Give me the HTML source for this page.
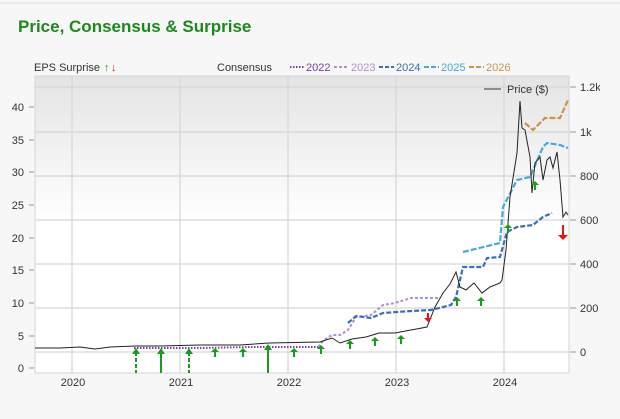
<!DOCTYPE html>
<html><head><style>
body{margin:0;width:620px;height:414px;background:#f6f6f6;font-family:"Liberation Sans",sans-serif;overflow:hidden}
</style></head><body>
<svg width="620" height="414" xmlns="http://www.w3.org/2000/svg" font-family="Liberation Sans, sans-serif">
<defs><linearGradient id="g" x1="0" y1="0" x2="0" y2="1"><stop offset="0" stop-color="#e4e4e4"/><stop offset="0.5" stop-color="#ffffff"/><stop offset="1" stop-color="#ffffff"/></linearGradient></defs>
<rect x="0" y="0" width="620" height="414" fill="#f7f7f7"/>
<line x1="0" y1="3" x2="620" y2="3" stroke="#dcdcdc"/>
<text x="18" y="32" font-size="17" font-weight="bold" fill="#1b8a1b">Price, Consensus &amp; Surprise</text>
<text x="34" y="71" font-size="11" fill="#333">EPS Surprise</text>
<text x="104" y="71" font-size="11" fill="#1a9a1a" font-weight="bold">↑</text>
<text x="111" y="71" font-size="11" fill="#e11" font-weight="bold">↓</text>
<text x="217" y="71" font-size="11" fill="#333">Consensus</text>
<line x1="290" y1="67" x2="305" y2="67" stroke="#7b3fa0" stroke-width="2" stroke-dasharray="1.5,1.5"/>
<text x="306" y="71" font-size="11" fill="#7b3fa0">2022</text>
<line x1="334" y1="67" x2="349" y2="67" stroke="#b48fd0" stroke-width="2" stroke-dasharray="3,2"/>
<text x="351" y="71" font-size="11" fill="#b48fd0">2023</text>
<line x1="379" y1="67" x2="394" y2="67" stroke="#3a6fb5" stroke-width="2" stroke-dasharray="4,2"/>
<text x="396" y="71" font-size="11" fill="#3a6fb5">2024</text>
<line x1="424" y1="67" x2="439" y2="67" stroke="#4aa8d8" stroke-width="2" stroke-dasharray="5,2"/>
<text x="441" y="71" font-size="11" fill="#4aa8d8">2025</text>
<line x1="469" y1="67" x2="484" y2="67" stroke="#c8964b" stroke-width="2" stroke-dasharray="5,2"/>
<text x="486" y="71" font-size="11" fill="#c8964b">2026</text>
<rect x="35" y="76" width="534" height="297" fill="url(#g)" stroke="#d4d4d4"/>
<g stroke="#d6d6d6" stroke-width="1.2">
<line x1="35" y1="87" x2="569" y2="87"/><line x1="35" y1="132" x2="569" y2="132"/><line x1="35" y1="176" x2="569" y2="176"/><line x1="35" y1="220" x2="569" y2="220"/><line x1="35" y1="264" x2="569" y2="264"/><line x1="35" y1="308" x2="569" y2="308"/><line x1="35" y1="352" x2="569" y2="352"/>
<line x1="72" y1="76" x2="72" y2="373"/><line x1="180" y1="76" x2="180" y2="373"/><line x1="288" y1="76" x2="288" y2="373"/><line x1="396" y1="76" x2="396" y2="373"/><line x1="504" y1="76" x2="504" y2="373"/>
</g>
<g font-size="11" fill="#333" text-anchor="end">
<text x="24" y="111">40</text><text x="24" y="144">35</text><text x="24" y="176">30</text><text x="24" y="209">25</text><text x="24" y="242">20</text><text x="24" y="274">15</text><text x="24" y="307">10</text><text x="24" y="340">5</text><text x="24" y="372">0</text>
</g>
<g stroke="#999"><line x1="29" y1="107" x2="34" y2="107"/><line x1="29" y1="140" x2="34" y2="140"/><line x1="29" y1="172" x2="34" y2="172"/><line x1="29" y1="205" x2="34" y2="205"/><line x1="29" y1="238" x2="34" y2="238"/><line x1="29" y1="270" x2="34" y2="270"/><line x1="29" y1="303" x2="34" y2="303"/><line x1="29" y1="336" x2="34" y2="336"/><line x1="29" y1="368" x2="34" y2="368"/>
<line x1="570" y1="87" x2="576" y2="87"/><line x1="570" y1="132" x2="576" y2="132"/><line x1="570" y1="176" x2="576" y2="176"/><line x1="570" y1="220" x2="576" y2="220"/><line x1="570" y1="264" x2="576" y2="264"/><line x1="570" y1="308" x2="576" y2="308"/><line x1="570" y1="352" x2="576" y2="352"/></g>
<g font-size="11" fill="#333">
<text x="580" y="91">1.2k</text><text x="580" y="136">1k</text><text x="580" y="180">800</text><text x="580" y="224">600</text><text x="580" y="268">400</text><text x="580" y="312">200</text><text x="580" y="356">0</text>
</g>
<rect x="600" y="76" width="20" height="20" fill="#f7f7f7"/>
<g font-size="11" fill="#333" text-anchor="middle">
<text x="73" y="386">2020</text><text x="181" y="386">2021</text><text x="289" y="386">2022</text><text x="397" y="386">2023</text><text x="505" y="386">2024</text>
</g>
<line x1="484" y1="89" x2="501" y2="89" stroke="#333"/>
<text x="507" y="93" font-size="11" fill="#333">Price ($)</text>
<polyline fill="none" stroke="#7b3fa0" stroke-width="2" stroke-dasharray="1.5,1.5" points="134,348 200,348 250,347 320,347"/>
<polyline fill="none" stroke="#b48fd0" stroke-width="2" stroke-dasharray="3,2" points="318,347 324,340 332,335 340,335 348,330 356,317 371,315 383,305 395,303 411,298 439,298"/>
<polyline fill="none" stroke="#3a6fb5" stroke-width="2.2" stroke-dasharray="5,2" points="348,323 356,316 371,318 383,313 411,311 431,310 451,305 456,297 460,280 463,267 483,267 487,258 500,257 507,232 517,227 533,225 543,217 552,213"/>
<polyline fill="none" stroke="#4aa8d8" stroke-width="2.2" stroke-dasharray="6,2" points="463,252 500,243 503,207 517,180 530,177 543,147 547,143 560,145 568,148"/>
<polyline fill="none" stroke="#c8964b" stroke-width="2.2" stroke-dasharray="6,2" points="525,123 533,130 545,118 560,118 568,100"/>
<polyline fill="none" stroke="#222" stroke-width="1" points="35,348 60,348 80,347 95,349 110,347 135,346 160,346 200,345 240,345 269,343 320,342 332,338 340,343 352,339 366,337 379,333 395,333 411,330 427,327 435,307 443,293 450,284 456,272 460,287 466,290 474,283 482,293 490,287 500,283 502,280 506,250 510,197 517,153 520,101 522,128 525,130 530,157 532,193 535,163 540,157 543,180 547,160 550,157 553,168 557,152 560,180 563,217 566,212 568,215"/>
<g stroke="#1c9a1c" stroke-width="2" fill="#1c9a1c">
<line x1="136" y1="352" x2="136" y2="373" stroke-dasharray="4,2"/><polygon points="132,354 140,354 136,348" stroke="none"/>
<line x1="161" y1="352" x2="161" y2="373"/><polygon points="157,354 165,354 161,348" stroke="none"/>
<line x1="189" y1="352" x2="189" y2="373" stroke-dasharray="4,2"/><polygon points="185,354 193,354 189,348" stroke="none"/>
<line x1="268" y1="348" x2="268" y2="373"/><polygon points="264,350 272,350 268,344" stroke="none"/>
</g>
<g fill="#1c9a1c">
<path d="M215,348 l-4,4 h3 v5 h2 v-5 h3z"/><path d="M243,348 l-4,4 h3 v5 h2 v-5 h3z"/><path d="M294,348 l-4,4 h3 v5 h2 v-5 h3z"/><path d="M321,345 l-4,4 h3 v5 h2 v-5 h3z"/><path d="M350,340 l-4,4 h3 v5 h2 v-5 h3z"/><path d="M375,337 l-4,4 h3 v5 h2 v-5 h3z"/><path d="M401,335 l-4,4 h3 v5 h2 v-5 h3z"/><path d="M457,297 l-4,4 h3 v5 h2 v-5 h3z"/><path d="M481,297 l-4,4 h3 v5 h2 v-5 h3z"/><path d="M508,224 l-4,4 h3 v5 h2 v-5 h3z"/><path d="M535,181 l-4,4 h3 v5 h2 v-5 h3z"/>
</g>
<g fill="#e11">
<path d="M428,322 l-4,-4 h3 v-5 h2 v5 h3z"/><path d="M563,240 l-5,-5 h4 v-10 h2 v10 h4z"/>
</g>
</svg>
</body></html>
